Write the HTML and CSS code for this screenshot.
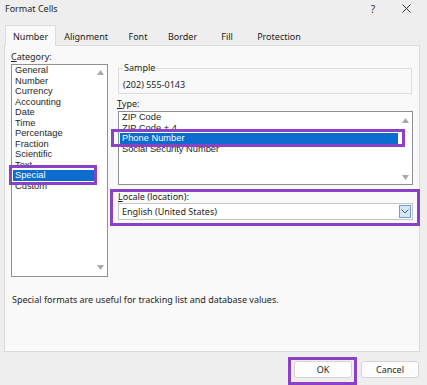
FILE: index.html
```html
<!DOCTYPE html>
<html lang="en">
<head>
  <meta charset="UTF-8">
  <meta name="viewport" content="width=device-width, initial-scale=1.0">
  <title>Format Cells</title>
  <link rel="stylesheet" href="styles.css">
</head>
<body>
  <div class="dialog">
    <header class="titlebar">
      <span class="title">Format Cells</span>
      <div class="controls">
        <span class="help">?</span>
        <svg class="close" width="9" height="9" viewBox="0 0 9 9">
          <path d="M0.5 0.5 L8.5 8.5 M8.5 0.5 L0.5 8.5" stroke="#333" stroke-width="1" fill="none"/>
        </svg>
      </div>
    </header>

    <nav class="tabs">
      <div class="tab active">Number</div>
      <div class="tab">Alignment</div>
      <div class="tab">Font</div>
      <div class="tab">Border</div>
      <div class="tab">Fill</div>
      <div class="tab">Protection</div>
    </nav>

    <section class="panel">
      <div class="columns">
        <div class="col-left">
          <div class="label"><u>C</u>ategory:</div>
          <div class="listbox cat-list">
            <ul class="items">
              <li>General</li>
              <li>Number</li>
              <li>Currency</li>
              <li>Accounting</li>
              <li>Date</li>
              <li>Time</li>
              <li>Percentage</li>
              <li>Fraction</li>
              <li>Scientific</li>
              <li>Text</li>
              <li class="selected mark mark-special">Special</li>
              <li>Custom</li>
            </ul>
            <div class="scroll">
              <svg width="7" height="5" viewBox="0 0 7 5"><polygon points="3.5,0 7,5 0,5" fill="#a8a8a8"/></svg>
              <svg width="7" height="5" viewBox="0 0 7 5"><polygon points="0,0 7,0 3.5,5" fill="#a8a8a8"/></svg>
            </div>
          </div>
        </div>

        <div class="col-right">
          <fieldset class="sample">
            <legend>Sample</legend>
            <div class="sample-value">(202) 555-0143</div>
          </fieldset>

          <div class="label type-label"><u>T</u>ype:</div>
          <div class="listbox type-list">
            <ul class="items">
              <li>ZIP Code</li>
              <li>ZIP Code + 4</li>
              <li class="selected mark mark-phone">Phone Number</li>
              <li>Social Security Number</li>
            </ul>
            <div class="scroll">
              <svg width="7" height="5" viewBox="0 0 7 5"><polygon points="3.5,0 7,5 0,5" fill="#a8a8a8"/></svg>
              <svg width="7" height="5" viewBox="0 0 7 5"><polygon points="0,0 7,0 3.5,5" fill="#a8a8a8"/></svg>
            </div>
          </div>

          <div class="locale mark mark-locale">
            <div class="label"><u>L</u>ocale (location):</div>
            <div class="select">
              <span>English (United States)</span>
              <span class="select-btn">
                <svg width="8" height="5" viewBox="0 0 8 5"><path d="M0.5 0.5 L4 4 L7.5 0.5" stroke="#3d5f86" stroke-width="1" fill="none"/></svg>
              </span>
            </div>
          </div>
        </div>
      </div>

      <p class="desc">Special formats are useful for tracking list and database values.</p>
    </section>

    <footer class="buttons">
      <button type="button" class="btn mark mark-ok">OK</button>
      <button type="button" class="btn">Cancel</button>
    </footer>
  </div>
</body>
</html>
```

FILE: styles.css
```css
body {
  margin: 0;
  font-family: "Noto Sans", "DejaVu Sans", sans-serif;
  font-size: 9px;
  color: #1e1e1e;
  background-color: #eeeeee;
}
.dialog {
  width: 427px;
  height: 385px;
  overflow: hidden;
}
.titlebar {
  height: 17px;
  display: flex;
  align-items: center;
  justify-content: space-between;
  padding: 0 16px 0 5px;
}
.controls {
  display: flex;
  align-items: center;
  gap: 27px;
}
.help {
  font-size: 10px;
  color: #333;
}
.tabs {
  display: flex;
  margin-top: 8px;
  padding-left: 5px;
  margin-bottom: -1px;
  position: relative;
  z-index: 1;
}
.tab {
  height: 21px;
  line-height: 21px;
  padding: 0 7px;
  min-width: 44px;
  box-sizing: border-box;
  text-align: center;
  border: 1px solid transparent;
  border-bottom: none;
  color: #222;
}
.tab.active {
  background-color: #f9f9f9;
  border-color: #dcdcdc;
}
.panel {
  height: 307px;
  box-sizing: border-box;
  margin: 0 7px 0 4px;
  border: 1px solid #dadada;
  background-color: #f9f9f9;
  padding: 5px 6px 0 6px;
}
.columns {
  display: grid;
  grid-template-columns: 97px 1fr;
  column-gap: 9px;
}
.label {
  line-height: 11px;
}
.listbox {
  display: flex;
  background-color: #fff;
  border: 1px solid #8d9096;
}
.items {
  flex: 1;
  list-style: none;
  margin: 0;
  padding: 0;
  font-family: "Liberation Sans", Arial, sans-serif;
  font-size: 9.3px;
}
.items li {
  line-height: 10.5px;
  height: 10.5px;
  padding-left: 2px;
  margin-left: 1px;
  white-space: nowrap;
}
.items li.selected {
  background-color: #0b6cd0;
  color: #fff;
}
.scroll {
  width: 13px;
  display: flex;
  flex-direction: column;
  justify-content: space-between;
  align-items: center;
  padding: 5px 0 6px;
}
.cat-list {
  margin-top: 2px;
  height: 213px;
  box-sizing: border-box;
}
.sample {
  margin: 12px 1px 0 1px;
  padding: 0 4px 3px 4px;
  border: 1px solid #dcdcdc;
}
.sample legend {
  padding: 0 1px;
  line-height: 10px;
}
.sample-value {
  margin-top: 6px;
  line-height: 11px;
}
.type-label {
  margin-top: 4px;
}
.type-list {
  margin: 2px 0 0 1px;
  height: 74px;
  box-sizing: border-box;
}
.type-list .scroll {
  width: 14px;
  padding: 6px 0 4px;
}
.locale {
  margin: 6px 0 0 1px;
}
.select {
  margin-top: 1px;
  height: 17px;
  box-sizing: border-box;
  border: 1px solid #c4c4c4;
  background-color: #fff;
  display: flex;
  align-items: center;
  justify-content: space-between;
  padding: 0 0 0 3px;
}
.select-btn {
  width: 12px;
  height: 13px;
  margin-right: 1px;
  box-sizing: border-box;
  border: 1px solid #6f9fd0;
  background-color: #d6e6f6;
  display: flex;
  align-items: center;
  justify-content: center;
}
.desc {
  margin: 17px 0 0 1px;
  line-height: 11px;
}
.buttons {
  display: flex;
  justify-content: flex-end;
  gap: 9px;
  padding: 9px 8px 0 0;
}
.btn {
  width: 58px;
  height: 17px;
  font-family: inherit;
  font-size: 9px;
  color: #1e1e1e;
  background-color: #fdfdfd;
  border: 1px solid #d3d3d3;
  border-radius: 3px;
  padding: 0;
}

/* purple annotation boxes */
.mark {
  position: relative;
}
.mark::after {
  content: "";
  position: absolute;
  border: 3px solid #8b41c6;
  pointer-events: none;
}
.mark-special::after {
  top: -5px;
  bottom: -4px;
  left: -4px;
  right: -3px;
}
.mark-phone::after {
  top: -4px;
  bottom: -3px;
  left: -9px;
  right: -7px;
}
.mark-locale::after {
  top: -2px;
  bottom: -6px;
  left: -8px;
  right: -7px;
}
.mark-ok::after {
  top: -5px;
  bottom: -8px;
  left: -7px;
  right: -6px;
}
```
